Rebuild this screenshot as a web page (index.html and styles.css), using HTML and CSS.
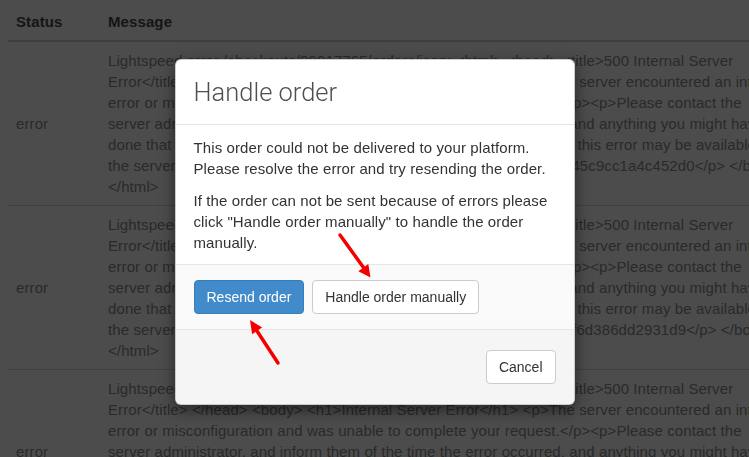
FILE: index.html
```html
<!DOCTYPE html>
<html lang="en">
<head>
    <meta charset="UTF-8">
    <meta name="viewport" content="width=device-width, initial-scale=1.0">
    <title>Order errors</title>
    <link rel="stylesheet" href="styles.css">
</head>
<body>
    <div class="page">
        <table class="log-table">
            <colgroup>
                <col class="col-status">
                <col class="col-message">
            </colgroup>
            <thead>
                <tr>
                    <th>Status</th>
                    <th>Message</th>
                </tr>
            </thead>
            <tbody>
                <tr>
                    <td>error</td>
                    <td>Lightspeed error /checkouts/29917765/orders/json: &lt;html&gt; &lt;head&gt; &lt;title&gt;500 Internal Server Error&lt;/title&gt; &lt;/head&gt; &lt;body&gt; &lt;h1&gt;Internal Server Error&lt;/h1&gt; &lt;p&gt;The server encountered an internal error or misconfiguration and was unable to complete your request.&lt;/p&gt;&lt;p&gt;Please contact the server administrator, and inform them of the time the error occurred, and anything you might have done that may have caused the error.&lt;/p&gt;&lt;p&gt;More information about this error may be available in the server error log.&lt;/p&gt; &lt;p&gt;Request ID: 8b21e7f0d34a96c5e12b7fa45c9cc1a4c452d0&lt;/p&gt; &lt;/body&gt; &lt;/html&gt;</td>
                </tr>
                <tr>
                    <td>error</td>
                    <td>Lightspeed error /checkouts/29917765/orders/json: &lt;html&gt; &lt;head&gt; &lt;title&gt;500 Internal Server Error&lt;/title&gt; &lt;/head&gt; &lt;body&gt; &lt;h1&gt;Internal Server Error&lt;/h1&gt; &lt;p&gt;The server encountered an internal error or misconfiguration and was unable to complete your request.&lt;/p&gt;&lt;p&gt;Please contact the server administrator, and inform them of the time the error occurred, and anything you might have done that may have caused the error.&lt;/p&gt;&lt;p&gt;More information about this error may be available in the server error log.&lt;/p&gt; &lt;p&gt;Request ID: 3e0a97b4e21d58a0e6e3b9f6d386dd2931d9&lt;/p&gt; &lt;/body&gt; &lt;/html&gt;</td>
                </tr>
                <tr>
                    <td>error</td>
                    <td>Lightspeed error /checkouts/29917765/orders/json: &lt;html&gt; &lt;head&gt; &lt;title&gt;500 Internal Server Error&lt;/title&gt; &lt;/head&gt; &lt;body&gt; &lt;h1&gt;Internal Server Error&lt;/h1&gt; &lt;p&gt;The server encountered an internal error or misconfiguration and was unable to complete your request.&lt;/p&gt;&lt;p&gt;Please contact the server administrator, and inform them of the time the error occurred, and anything you might have done that may have caused the error.&lt;/p&gt;&lt;p&gt;More information about this error may be available in the server error log.&lt;/p&gt; &lt;p&gt;Request ID: 51e8d2a0c7b34096e0d1a8c2b7e409fe3c8ab2&lt;/p&gt; &lt;/body&gt; &lt;/html&gt;</td>
                </tr>
            </tbody>
        </table>
    </div>

    <div class="backdrop"></div>

    <div class="modal">
        <div class="modal-dialog">
            <div class="modal-content">
                <div class="modal-header">
                    <h4 class="modal-title">Handle order</h4>
                </div>
                <div class="modal-body">
                    <p>This order could not be delivered to your platform. Please resolve the error and try resending the order.</p>
                    <p>If the order can not be sent because of errors please click "Handle order manually" to handle the order manually.</p>
                </div>
                <div class="modal-actions">
                    <button class="btn btn-primary">Resend order</button>
                    <button class="btn btn-default">Handle order manually</button>
                </div>
                <div class="modal-footer">
                    <button class="btn btn-default">Cancel</button>
                </div>
            </div>
        </div>

        <!-- red arrows pointing at the two buttons -->
        <svg class="annotations" width="749" height="457" viewBox="0 0 749 457">
            <line x1="340" y1="235" x2="363.5" y2="267.5" stroke="#f50000" stroke-width="3.5" stroke-linecap="round"/>
            <polygon points="370.5,277.5 358.3,271.3 368.3,263.9" fill="#f50000"/>
            <line x1="278" y1="363" x2="257" y2="331" stroke="#f50000" stroke-width="3.5" stroke-linecap="round"/>
            <polygon points="250,320 262.1,327.6 252.1,334.2" fill="#f50000"/>
        </svg>
    </div>
</body>
</html>
```

FILE: styles.css
```css
/* Reset basic styles */
* {
    margin: 0;
    padding: 0;
    box-sizing: border-box;
}

body {
    font-family: 'Liberation Sans', Arial, Helvetica, sans-serif;
    font-size: 15px;
    line-height: 21px;
    letter-spacing: 0.1px;
    color: #333;
    background: #fff;
    overflow: hidden;
}

.page {
    padding: 3px 8px 0;
}

/* Background log table */
.log-table {
    width: 787px;
    border-collapse: collapse;
    table-layout: fixed;
}

.col-status {
    width: 92px;
}

.log-table th {
    text-align: left;
    padding: 8px;
    font-weight: bold;
    color: #4a4a4a;
    border-bottom: 2px solid #cfcfcf;
}

.log-table td {
    padding: 8px;
    color: #8c8c8c;
    border-top: 1px solid #d6d6d6;
    vertical-align: middle;
}

.backdrop {
    position: fixed;
    inset: 0;
    background-color: rgba(0, 0, 0, 0.7);
}

/* Modal */
.modal {
    position: fixed;
    inset: 0;
}

.modal-dialog {
    width: 400px;
    margin: 59px auto 0;
}

.modal-content {
    background-color: #fff;
    border: 1px solid rgba(0, 0, 0, 0.2);
    border-radius: 6px;
    box-shadow: 0 5px 15px rgba(0, 0, 0, 0.5);
    overflow: hidden;
}

.modal-header {
    padding: 15px 18px;
    border-bottom: 1px solid #e5e5e5;
}

.modal-title {
    font-family: Roboto, 'Liberation Sans', sans-serif;
    font-size: 25.5px;
    font-weight: 300;
    line-height: 34px;
    letter-spacing: 0;
    color: #4f4f4f;
}

.modal-body {
    padding: 12px 18px 0;
}

.modal-body p {
    margin-bottom: 11px;
}

.modal-actions {
    display: flex;
    gap: 8px;
    padding: 15px 18px;
    background-color: #fafafa;
    border-top: 1px solid #e5e5e5;
}

.modal-footer {
    display: flex;
    justify-content: flex-end;
    padding: 20px 18px;
    background-color: #f5f5f5;
    border-top: 1px solid #e5e5e5;
}

/* Buttons */
.btn {
    font-family: inherit;
    font-size: 14px;
    line-height: 20px;
    letter-spacing: 0;
    padding: 6px 12px;
    border: 1px solid transparent;
    border-radius: 4px;
    cursor: pointer;
}

.btn-primary {
    background-color: #428bca;
    border-color: #357ebd;
    color: #fff;
}

.btn-default {
    background-color: #fff;
    border-color: #ccc;
    color: #333;
}

.annotations {
    position: absolute;
    top: 0;
    left: 0;
    pointer-events: none;
}
```
